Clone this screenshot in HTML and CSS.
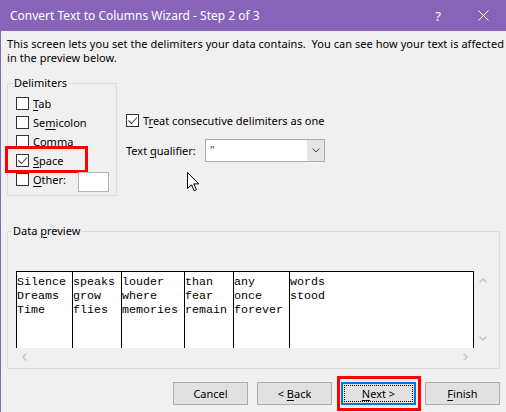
FILE: index.html
```html
<!DOCTYPE html>
<html>
<head>
<meta charset="utf-8">
<title>Convert Text to Columns Wizard</title>
<link rel="stylesheet" href="styles.css">
</head>
<body>
<div class="titlebar">
  <span class="title">Convert Text to Columns Wizard - Step 2 of 3</span>
  <span class="help">?</span>
  <svg class="close" viewBox="0 0 11 11" width="11" height="11"><path d="M0.5 0.5 L10.5 10.5 M10.5 0.5 L0.5 10.5" stroke="#fff" stroke-width="1" fill="none"/></svg>
</div>
<div class="main">
  <p class="desc">This screen lets you set the delimiters your data contains.&nbsp; You can see how your text is affected<br>in the preview below.</p>
  <div class="top">
    <fieldset class="delims">
      <legend>Delimiters</legend>
      <div class="opt"><span class="cb"></span><span><u>T</u>ab</span></div>
      <div class="opt"><span class="cb"></span><span>Se<u>m</u>icolon</span></div>
      <div class="opt"><span class="cb"></span><span>Comma</span></div>
      <div class="opt"><span class="cb"><svg viewBox="0 0 11 11" width="11" height="11"><path d="M1.5 5.5 L4.5 8.5 L10 2.5" stroke="#444" stroke-width="1.1" fill="none"/></svg></span><span><u>S</u>pace</span><span class="mark mark-space"></span></div>
      <div class="opt other"><span class="cb"></span><span><u>O</u>ther:</span><span class="textbox"></span></div>
    </fieldset>
    <div class="right">
      <div class="opt short"><span class="cb"><svg viewBox="0 0 11 11" width="11" height="11"><path d="M1.5 5.5 L4.5 8.5 L10 2.5" stroke="#444" stroke-width="1.1" fill="none"/></svg></span><span>T<u>r</u>eat consecutive delimiters as one</span></div>
      <div class="qual">
        <span class="qual-label">Text <u>q</u>ualifier:</span>
        <div class="combo"><span class="val">"</span><span class="drop"><svg viewBox="0 0 8 5" width="8" height="5"><path d="M0.5 0.5 L4 4 L7.5 0.5" stroke="#444" fill="none"/></svg></span></div>
      </div>
    </div>
    <svg class="cursor" viewBox="0 0 13 20" width="13" height="20"><path d="M0.5 0.5 L0.5 16.5 L4.5 12.8 L7.2 18.8 L9.4 17.8 L6.8 11.9 L11.8 11.9 Z" fill="#fff" stroke="#000" stroke-width="1" stroke-linejoin="miter"/></svg>
  </div>
  <fieldset class="preview">
    <legend>Data <u>p</u>review</legend>
    <div class="grid">
      <div class="table">
        <div class="col c1">Silence
Dreams
Time</div>
        <div class="col c2">speaks
grow
flies</div>
        <div class="col c3">louder
where
memories</div>
        <div class="col c4">than
fear
remain</div>
        <div class="col c5">any
once
forever</div>
        <div class="col c6">words
stood</div>
      </div>
      <div class="vscroll">
        <svg viewBox="0 0 8 5" width="8" height="5"><path d="M0.5 4.5 L4 1 L7.5 4.5" stroke="#c4c4c4" stroke-width="1.4" fill="none"/></svg>
        <svg viewBox="0 0 8 5" width="8" height="5"><path d="M0.5 0.5 L4 4 L7.5 0.5" stroke="#c4c4c4" stroke-width="1.4" fill="none"/></svg>
      </div>
      <div class="hscroll">
        <svg viewBox="0 0 5 8" width="5" height="8"><path d="M4.5 0.5 L1 4 L4.5 7.5" stroke="#c4c4c4" stroke-width="1.4" fill="none"/></svg>
        <svg viewBox="0 0 5 8" width="5" height="8"><path d="M0.5 0.5 L4 4 L0.5 7.5" stroke="#c4c4c4" stroke-width="1.4" fill="none"/></svg>
      </div>
    </div>
  </fieldset>
  <div class="buttons">
    <div class="btn"><span>Cancel</span></div>
    <div class="btn"><span>&lt; <u>B</u>ack</span></div>
    <div class="btn default"><span class="focus"></span><span><u>N</u>ext &gt;</span><span class="mark mark-next"></span></div>
    <div class="btn"><span><u>F</u>inish</span></div>
  </div>
</div>
</body>
</html>
```

FILE: styles.css
```css
* { box-sizing: border-box; }
html, body { margin: 0; padding: 0; }
body {
  width: 506px;
  height: 412px;
  overflow: hidden;
  background: #f0f0f0;
  font-family: "Noto Sans", "Open Sans", sans-serif;
  font-size: 11px;
  color: #000;
}
u { text-decoration: underline; text-underline-offset: 2px; }

.titlebar {
  height: 31px;
  background: #8764b8;
  color: #fff;
  display: flex;
  align-items: center;
  padding-left: 10px;
  font-size: 12px;
}
.title { flex: 1; }
.help { margin-right: 37px; font-size: 13px; }
.close { margin-right: 17px; }

.main {
  height: 381px;
  border-left: 1px solid #8764b8;
  padding: 6px 6px 0 6px;
}
.desc { margin: 0; line-height: 14px; white-space: nowrap; letter-spacing: 0.05px; }

.top {
  display: flex;
  align-items: flex-start;
  margin-top: 11px;
  position: relative;
}
fieldset {
  margin: 0;
  border: 1px solid #dcdcdc;
  min-width: 0;
}
legend { padding: 0 1px; line-height: 14px; }

.delims { width: 110px; padding: 4px 7px 6px 8px; }
.delims legend { margin-left: -3px; }

.opt {
  display: flex;
  align-items: center;
  gap: 4px;
  height: 19px;
  white-space: nowrap;
  position: relative;
}
.cb {
  width: 13px;
  height: 13px;
  flex: none;
  border: 1px solid #333;
  background: #fff;
  display: flex;
}
.other .textbox {
  align-self: flex-start;
  margin-top: 2px;
  margin-left: auto;
  width: 31px;
  height: 20px;
  flex: none;
  background: #fff;
  border: 1px solid #b4b4b4;
}
.mark {
  position: absolute;
  border: 3px solid #ff0000;
}
.mark-space { left: -11px; top: -5px; width: 83px; height: 27px; }

.right { margin-left: 9px; padding-top: 37px; }
.right .opt.short { height: 14px; }
.qual { display: flex; align-items: center; margin-top: 12px; }
.qual-label { width: 79px; flex: none; }
.combo {
  width: 120px;
  height: 23px;
  border: 1px solid #adadad;
  background: #fff;
  display: flex;
}
.combo .val { flex: 1; padding-left: 4px; line-height: 20px; color: #1a3a8a; }
.drop {
  width: 17px;
  background: #e5e5e5;
  display: flex;
  align-items: center;
  justify-content: center;
}
.cursor { position: absolute; left: 180px; top: 96px; }

.preview { margin-top: 28px; width: 493px; padding: 33px 8px 3px 8px; }
.preview legend { margin-left: -4px; }
.grid {
  display: grid;
  grid-template-columns: 458px 17px;
  grid-template-rows: 77px 17px;
}
.table {
  display: flex;
  background: #fff;
  border-top: 1px solid #000;
  border-right: 1px solid #000;
}
.col {
  border-left: 1px solid #000;
  padding-top: 3px;
  font-family: "Liberation Mono", "Courier New", monospace;
  font-size: 11.67px;
  line-height: 14px;
  white-space: pre;
  flex: none;
  overflow: hidden;
}
.c1 { width: 56px; }
.c2 { width: 49px; }
.c3 { width: 63px; }
.c4 { width: 49px; }
.c5 { width: 56px; }
.c6 { flex: 1; }
.vscroll {
  display: flex;
  flex-direction: column;
  justify-content: space-between;
  align-items: center;
  padding: 7px 0 7px 0;
}
.hscroll {
  display: flex;
  justify-content: space-between;
  align-items: center;
  padding: 0 6px;
}

.buttons {
  display: flex;
  justify-content: flex-end;
  gap: 9px;
  margin-top: 13px;
}
.btn {
  width: 75px;
  height: 23px;
  border: 1px solid #adadad;
  background: #e1e1e1;
  display: flex;
  align-items: center;
  justify-content: center;
  position: relative;
}
.btn.default { border: 2px solid #0078d7; }
.focus {
  position: absolute;
  inset: 1px;
  border: 1px dotted #000;
}
.mark-next { left: -6px; top: -8px; width: 84px; height: 35px; }
```
